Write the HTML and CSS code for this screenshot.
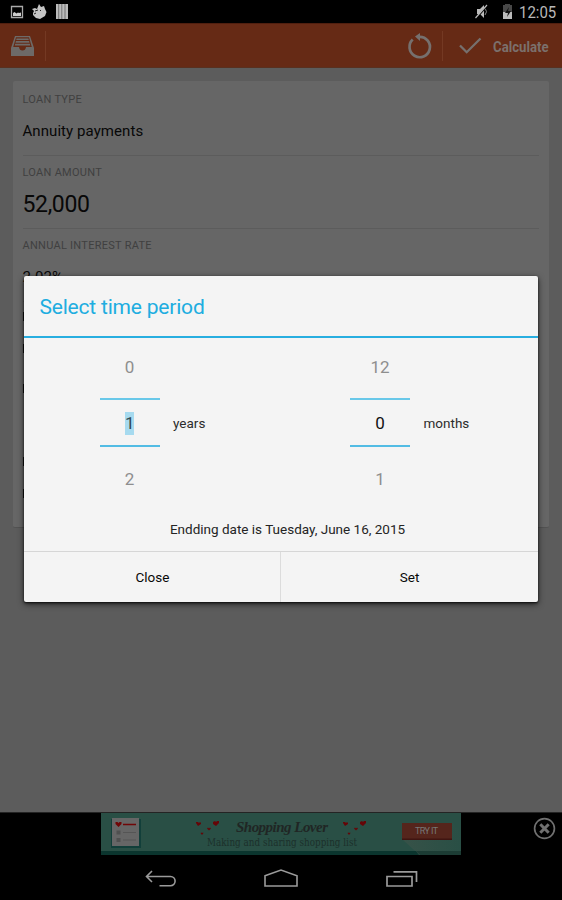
FILE: index.html
```html
<!DOCTYPE html>
<html lang="en">
<head>
<meta charset="utf-8">
<title>Loan calculator</title>
<link rel="stylesheet" href="styles.css">
</head>
<body>
<div class="screen">
  <header class="status">
    <svg class="notifications" width="80" height="23" viewBox="0 0 80 23">
      <path d="M11.500 6.500h11v11h-11z" fill="none" stroke="#aaa" stroke-width="1.300"/>
      <path d="M13 16v-3l1.500-1 2 1.500 1.500-1 1 .5 2-.5v3.500z" fill="#ccc"/>
      <path d="M32 9l3-1 2 1 2-5 2 3 3-1 1 3 1.500 3-1.500 4-5 3-4-1-3-3v-2l1-2z" fill="#c5c5c5"/>
      <path d="M35 11l3-1M34 14l2-1M40 10l1 1" stroke="#222" stroke-width="1"/>
      <path d="M56 4h12v15H56z" fill="#bbb"/>
      <path d="M58.700 4v15M61.800 4v15M65 4v15" stroke="#555" stroke-width=".7"/>
    </svg>
    <svg class="system" width="42" height="23" viewBox="0 0 42 23">
      <path d="M3 9h3l4-4v13l-4-4H3z" fill="#bbb"/>
      <path d="M11 8q3 4 0 7" fill="none" stroke="#888"/>
      <path d="M2.500 18L14 5" stroke="#000" stroke-width="1.500"/>
      <path d="M1.500 18L13 5" stroke="#bbb" stroke-width="1.200"/>
      <path d="M29 5h2V4h5v1h2v14h-9z" fill="#484848"/>
      <path d="M29 12h9v7h-9z" fill="#bbb"/>
      <path d="M35 7l-4 6h3l-1 4 4-6h-3z" fill="#111"/>
    </svg>
    <span class="clock">12:05</span>
  </header>

  <nav class="actionbar">
    <svg class="inbox" width="23" height="20" viewBox="0 0 23 20">
      <path d="M4 0h15l4 12v8H0v-8z" fill="#6d6a68"/>
      <path d="M5 1.300h13L20.800 11H15q-.5 3.500-3.500 3.500T8 11H2.200z" fill="#662a15"/>
      <path d="M5.600 2.400h11.800l.4 1.500H5.200zM4.900 5h13.200l.4 1.700h-14zM4.200 7.700h14.700l.4 1.700H3.800z" fill="#6d6a68"/>
    </svg>
    <i class="divider"></i>
    <svg class="reload" width="26" height="28" viewBox="0 0 26 28">
      <path d="M5.700 7.600A10.200 10.200 0 1 0 12.500 4.800" fill="none" stroke="#76706e" stroke-width="2.700"/>
      <path d="M8 4.500L13 1v8z" fill="#76706e"/>
    </svg>
    <i class="divider"></i>
    <svg class="check" width="23" height="18" viewBox="0 0 23 18">
      <path d="M1 8.500l6.700 6.700L21.500 1.500" fill="none" stroke="#76706e" stroke-width="2.300"/>
    </svg>
    <span class="calculate">Calculate</span>
  </nav>

  <main class="content">
    <section class="card">
      <div class="field"><div class="label">LOAN TYPE</div><div class="value">Annuity payments</div></div>
      <div class="field"><div class="label">LOAN AMOUNT</div><div class="value large">52,000</div></div>
      <div class="field"><div class="label">ANNUAL INTEREST RATE</div><div class="value rate">2.02%</div></div>
      <div class="stems"><i></i><i></i><i></i><i></i><i></i></div>
    </section>
  </main>

  <aside class="ad">
    <div class="banner">
      <svg width="360" height="42" viewBox="0 0 360 42">
        <defs><linearGradient id="fade" x1="0" y1="0" x2="1" y2="0"><stop offset="0" stop-color="#375248"/><stop offset="1" stop-color="#294f45"/></linearGradient></defs>
        <path d="M0 0h360v42H0z" fill="#294f45"/>
        <path d="M301 26h50V9l9 10v23h-41.500z" fill="url(#fade)"/>
        <path d="M0 38h315l3 4H0z" fill="#0b352e"/>
        <path d="M315 38h45v4h-41z" fill="#1c3c34"/>
        <path d="M10 6h30v29H10z" fill="#123f3a"/>
        <path d="M11 5h27v28H11z" fill="#666"/>
        <path d="M17.500 14l-3-3v-2h2l1 1 1-1h2v2z" fill="#700607"/>
        <path d="M22 11.500h13" stroke="#700607" stroke-width="1.500"/>
        <path d="M22 19.500h13M22 27h13" stroke="#555" stroke-width="1.200"/>
        <path d="M15.500 17.500h4v4h-4zM15.500 25h4v4h-4z" fill="#505050"/>
        <g id="hearts" fill="#650507">
          <path d="M97 13l-2-3V9h2l1 1 1-1 1 1v1zM115 13l-3-2V9l2-1 1 1 1-1h2v2zM108 17.500l-2-2 1-1 1 1 1-1 1 1zM101 22l-1.500-2 1-.5.500.5 1-.5.500.5z"/>
        </g>
        <use href="#hearts" x="147"/>
        <path d="M301 10h50v17h-50z" fill="#401511"/>
        <path d="M301 10h50v15.500h-50z" fill="#55251c"/>
        <text class="brand" x="135" y="18.500" textLength="92">Shopping Lover</text>
        <text class="tagline" x="106" y="33" textLength="150" lengthAdjust="spacingAndGlyphs">Making and sharing shopping list</text>
        <text class="try" x="314" y="20.500" textLength="23">TRY IT</text>
      </svg>
    </div>
    <svg class="dismiss" width="23" height="23" viewBox="0 0 23 23" fill="none" stroke="#707070">
      <circle cx="11.500" cy="11.500" r="9.900" stroke-width="1.700"/>
      <path d="M7.300 7.300l8.400 8.400M15.700 7.300l-8.400 8.400" stroke-width="3"/>
    </svg>
  </aside>

  <footer class="navigation">
    <svg width="32" height="20" viewBox="0 0 32 20" fill="none" stroke="#9b9b9b" stroke-width="1.600"><path d="M1.500 7.500H25.500a4.600 4.600 0 0 1 0 9.200H14.500M7 2L1.500 7.500 7 13"/></svg>
    <svg width="36" height="20" viewBox="0 0 36 20" fill="none" stroke="#9b9b9b" stroke-width="1.600"><path d="M2 6.800L18 1l16 5.800V17H2z"/></svg>
    <svg width="34" height="20" viewBox="0 0 34 20" fill="none" stroke="#9b9b9b" stroke-width="1.700"><path d="M2 7.500h25V17H2zM8.500 2.800h23V13"/></svg>
  </footer>

  <div class="dialog" role="dialog">
    <h1>Select time period</h1>
    <div class="pickers">
      <div class="picker">
        <div class="wheel"><span class="before">0</span><span class="current"><mark>1</mark></span><span class="after">2</span></div>
        <span class="unit">years</span>
      </div>
      <div class="picker">
        <div class="wheel"><span class="before">12</span><span class="current">0</span><span class="after">1</span></div>
        <span class="unit">months</span>
      </div>
    </div>
    <p class="ending">Endding date is Tuesday, June 16, 2015</p>
    <div class="buttons"><button>Close</button><button>Set</button></div>
  </div>
</div>
</body>
</html>
```
FILE: styles.css
```css
* { box-sizing: border-box; }
body { margin: 0; font-family: Roboto, "Liberation Sans", sans-serif; background: #000; }
svg { display: block; flex: none; }
.screen { position: relative; width: 562px; height: 900px; display: grid; grid-template-rows: 23px 45px 744px 43px 45px; overflow: hidden; }

.status { display: flex; background: #000; }
.system { margin-left: auto; }
.clock { width: 43px; margin-left: 3px; font-size: 17px; line-height: 24px; color: #b8b8b8; white-space: nowrap; transform: scaleX(.88); transform-origin: left; }

.actionbar { display: flex; align-items: center; background: #662a15; border-top: 1px solid #501f0f; border-bottom: 1px solid #59301f; }
.inbox { margin-left: 11px; }
.divider { width: 1px; height: 30px; margin-left: 11px; background: #743923; }
.reload { margin-left: auto; }
.reload + .divider { margin-left: 9px; }
.check { margin-left: 16px; }
.calculate { width: 57px; margin: 2px 12px 0 11px; color: #7b706c; font-size: 15px; font-weight: 700; white-space: nowrap; transform: scaleX(.88); transform-origin: left; }

.content { background: #5c5c5c; padding: 13px; }
.card { height: 447px; padding: 1px 10px 1px 9.500px; background: #666; border-radius: 2px; border-bottom: 1px solid #525252; }
.field { height: 73px; border-bottom: 1px solid #5c5c5c; }
.field:first-child { height: 74px; }
.field + .field .label { padding-top: 10px; }
.label { padding-top: 11px; font-size: 11px; line-height: 13px; color: #404040; letter-spacing: .27px; }
.value { margin-top: 15px; font-size: 15px; line-height: 20px; color: #080808; letter-spacing: .07px; }
.value.large { margin-top: 11px; font-size: 23px; line-height: 29px; letter-spacing: -.35px; }
.value.rate { margin-top: 15px; }
.stems { display: grid; grid-template-rows: 32px 40px 73px 32px 12px; padding: 10px 0 0 .5px; }
.stems i { width: 1px; height: 9px; background: #080808; }

.ad { display: flex; border-top: 1px solid #242424; background: #000; }
.banner { margin-left: 101px; }
.brand { font: italic 700 15px "Liberation Serif", serif; fill: #202624; }
.tagline { font: 10.500px "DejaVu Serif", serif; fill: #1c302b; }
.try { font: 9px Roboto, sans-serif; fill: #777; }
.dismiss { margin: 4px 0 0 72px; }

.navigation { display: grid; grid-template-columns: 32px 36px 34px; column-gap: 86px; padding: 14px 0 0 145px; background: #000; }

.dialog { position: absolute; left: 24px; top: 276px; width: 514px; height: 326px; display: grid; grid-template-rows: 62px 170px 43px 51px; background: #f4f4f4; border-radius: 2px; box-shadow: 0 1px 2px #111, 0 2px 6px rgba(0,0,0,.65); }
h1 { margin: 0; padding-left: 15.500px; font-size: 21px; line-height: 62px; font-weight: 400; letter-spacing: -.2px; color: #20ade0; border-bottom: 2px solid #28aee0; }
.pickers { display: grid; grid-template-columns: 250.500px 1fr; padding-left: 75.500px; }
.picker { display: flex; align-items: center; gap: 13.500px; }
.wheel { width: 60px; height: 170px; display: grid; grid-template-rows: 60px 49px 61px; text-align: center; font-size: 17px; color: #8e8e8e; }
.before { line-height: 58px; }
.current { color: #111; line-height: 46px; border-top: 2px solid #69c8e9; border-bottom: 2px solid #52bce4; }
.after { line-height: 64px; }
mark { display: inline-block; width: 9px; height: 23px; line-height: 23px; background: #a6daef; color: #334850; }
.unit { font-size: 13.500px; color: #2c2c2c; }
.ending { margin: 0; padding-left: 13px; text-align: center; font-size: 13.500px; line-height: 43px; color: #242424; }
.buttons { display: grid; grid-template-columns: 256px 1fr; border-top: 1px solid #d6d6d6; }
button { padding: 0; border: 0; background: none; font: 13.500px/50px Roboto, sans-serif; color: #080808; }
button:first-child { padding-left: 1px; }
button + button { border-left: 1px solid #dcdcdc; }
```
